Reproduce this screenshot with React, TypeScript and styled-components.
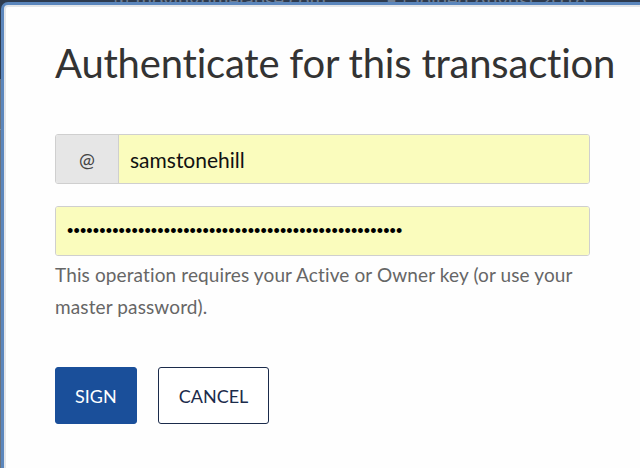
import React from "react";
import styled, { createGlobalStyle } from "styled-components";

const Global = createGlobalStyle`
  html, body { margin: 0; padding: 0; }
  body { width: 640px; height: 468px; overflow: hidden; background: #5f6670; }
  * { box-sizing: border-box; }
`;

const Page = styled.div`
  position: relative;
  width: 640px;
  height: 468px;
  overflow: hidden;
  background: #6b727b;
  font-family: "Lato", "Noto Sans", sans-serif;
`;

const BackdropHeader = styled.div`
  height: 90px;
  background: #2e3b4e;
  display: flex;
  justify-content: center;
  gap: 60px;
  color: #6f7f94;
  font-size: 20px;
  line-height: 20px;
  margin-top: -11px;
  padding-left: 60px;
`;

const BackdropLine = styled.div`
  height: 1px;
  background: #8a9099;
  margin-top: 50px;
`;

const Modal = styled.div`
  position: absolute;
  left: 1px;
  top: 2px;
  width: 680px;
  height: 500px;
  border: 3px solid #5b86bc;
  border-radius: 7px;
  background: #fefefe;
  box-shadow: inset 0 0 0 2px #e4e6e8;
  padding: 33px 0 0 51px;
`;

const Title = styled.h1`
  margin: 0;
  font-family: "Lato", sans-serif;
  font-weight: 400;
  font-size: 40px;
  line-height: 50px;
  color: #333;
  letter-spacing: -0.2px;
`;

const Form = styled.div`
  width: 535px;
  margin-top: 46px;
  display: flex;
  flex-direction: column;
`;

const InputGroup = styled.div<{ $mb?: number }>`
  display: flex;
  height: 50px;
  border: 1px solid #cfcfcf;
  border-radius: 3px;
  overflow: hidden;
  margin-bottom: ${(p) => p.$mb ?? 0}px;
`;

const Addon = styled.div`
  width: 63px;
  flex: none;
  background: #e6e6e6;
  border-right: 1px solid #cfcfcf;
  display: flex;
  align-items: center;
  justify-content: center;
  font-size: 19px;
  color: #444;
`;

const Field = styled.input`
  flex: 1;
  min-width: 0;
  border: none;
  outline: none;
  background: #fafcbd;
  font-family: "Lato", sans-serif;
  font-size: 21px;
  color: #111;
  padding: 0 11px;
  &[type="password"] {
    font-family: "Liberation Sans", sans-serif;
    font-size: 18px;
    letter-spacing: 0.15px;
    color: #000;
  }
`;

const Help = styled.p`
  margin: 3px 0 0;
  font-size: 19px;
  line-height: 32px;
  letter-spacing: 0.12px;
  color: #666;
`;

const Actions = styled.div`
  display: flex;
  gap: 21px;
  margin-top: 44px;
`;

const Button = styled.button<{ $primary?: boolean }>`
  height: 57px;
  padding: 0 ${(p) => (p.$primary ? 19 : 20)}px;
  border-radius: 3px;
  font-family: "Lato", sans-serif;
  font-size: 18px;
  text-transform: uppercase;
  cursor: pointer;
  border: 1px solid ${(p) => (p.$primary ? "#1a4f9a" : "#1b2b4b")};
  background: ${(p) => (p.$primary ? "#1a4f9a" : "#ffffff")};
  color: ${(p) => (p.$primary ? "#ffffff" : "#1b2b4b")};
`;

export default function App() {
  return (
    <>
      <Global />
      <Page>
        <BackdropHeader>
          <span>⊙ movingtimelapse.com</span>
          <span>▮ | Joined August 2016</span>
        </BackdropHeader>
        <BackdropLine />
        <Modal>
          <Title>Authenticate for this transaction</Title>
          <Form>
            <InputGroup $mb={22}>
              <Addon>@</Addon>
              <Field type="text" defaultValue="samstonehill" readOnly />
            </InputGroup>
            <InputGroup>
              <Field type="password" defaultValue={"x".repeat(52)} readOnly />
            </InputGroup>
            <Help>
              This operation requires your Active or Owner key (or use your master password).
            </Help>
            <Actions>
              <Button $primary>Sign</Button>
              <Button>Cancel</Button>
            </Actions>
          </Form>
        </Modal>
      </Page>
    </>
  );
}
